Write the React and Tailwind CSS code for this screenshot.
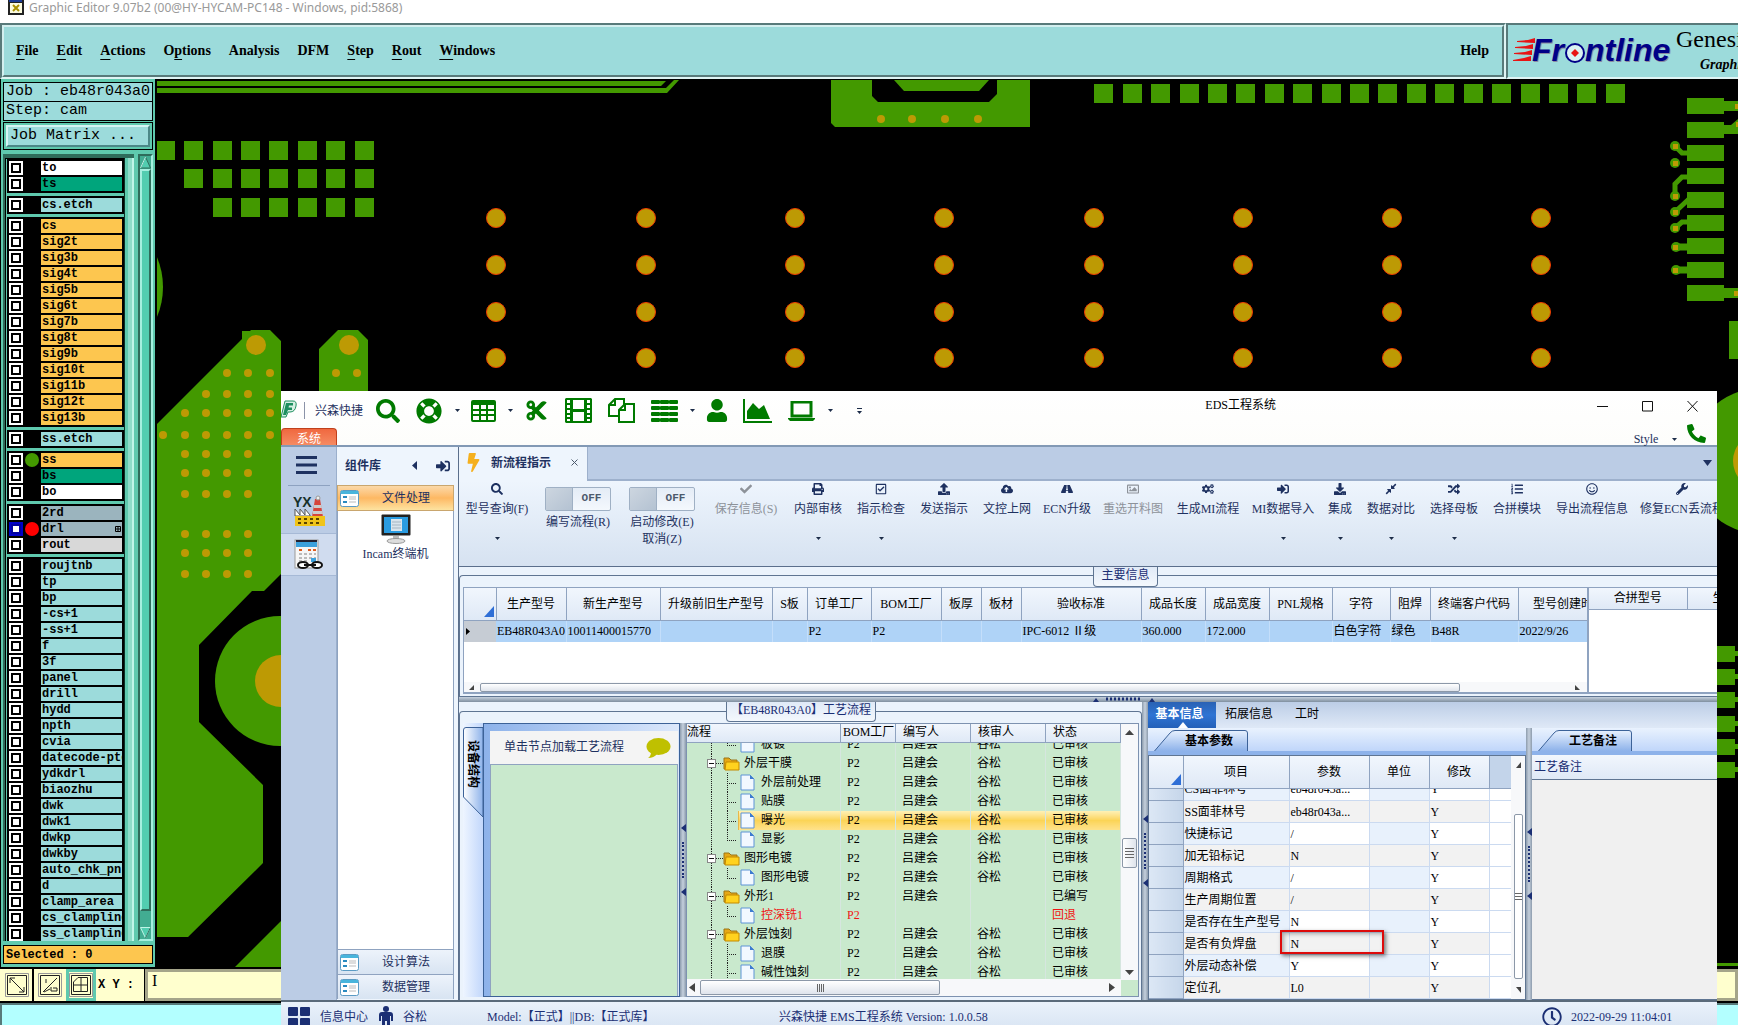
import { useState } from "react";
import {
  FaBolt, FaCheck, FaCloudUploadAlt, FaCogs, FaComment, FaCompressAlt, FaCut,
  FaDownload, FaLaptop, FaLifeRing, FaListOl, FaMale, FaPhone, FaPrint, FaRandom,
  FaRegCheckSquare, FaRegClock, FaRegImage, FaRegSmile, FaRoad, FaSearch, FaSignInAlt, FaUpload,
  FaUser, FaWrench,
} from "react-icons/fa";

const GREEN = "#439900";
const GOLD = "#bd9a04";

const menus = [
  ["F", "ile", ""],
  ["E", "dit", ""],
  ["A", "ctions", ""],
  ["p", "tions", "O"],
  ["", "Analysis", ""],
  ["", "DFM", ""],
  ["S", "tep", ""],
  ["R", "out", ""],
  ["W", "indows", ""],
];

const layerGroups = [
  { rows: [["to", "bg-white"], ["ts", "bg-[#00a57c]"]] },
  { rows: [["cs.etch", "bg-[#9cdbdb]"]] },
  {
    rows: ["cs", "sig2t", "sig3b", "sig4t", "sig5b", "sig6t", "sig7b", "sig8t", "sig9b", "sig10t", "sig11b", "sig12t", "sig13b"]
      .map((n) => [n, "bg-[#fdc64f]"]),
  },
  { rows: [["ss.etch", "bg-[#9cdbdb]"]] },
  { rows: [["ss", "bg-[#fdc64f]"], ["bs", "bg-[#00a57c]"], ["bo", "bg-white"]] },
  { rows: [["2rd", "bg-[#9bb4be]"], ["drl", "bg-[#9bb4be]"], ["rout", "bg-[#d8d8d8]"]] },
  {
    rows: ["roujtnb", "tp", "bp", "-cs+1", "-ss+1", "f", "3f", "panel", "drill", "hydd", "npth", "cvia", "datecode-pte",
      "ydkdrl", "biaozhu", "dwk", "dwk1", "dwkp", "dwkby", "auto_chk_pnl", "d", "clamp_area", "cs_clampline", "ss_clampline"]
      .map((n) => [n, "bg-[#9cdbdb]"]),
  },
];

const tools = [
  { label: "型号查询(F)", icon: FaSearch, w: "w-[66px]", caret: true },
  { label: "编写流程(R)", toggle: true, w: "w-[66px]" },
  { label: "启动修改(E)", second: "取消(Z)", toggle: true, w: "w-[72px]" },
  { label: "保存信息(S)", icon: FaCheck, w: "w-[66px]", off: true },
  { label: "内部审核", icon: FaPrint, w: "w-12", caret: true },
  { label: "指示检查", icon: FaRegCheckSquare, w: "w-12", caret: true },
  { label: "发送指示", icon: FaUpload, w: "w-12" },
  { label: "文控上网", icon: FaCloudUploadAlt, w: "w-12" },
  { label: "ECN升级", icon: FaRoad, w: "w-[42px]" },
  { label: "重选开料图", icon: FaRegImage, w: "w-[60px]", off: true },
  { label: "生成MI流程", icon: FaCogs, w: "w-[60px]" },
  { label: "MI数据导入", icon: FaSignInAlt, w: "w-[60px]", caret: true },
  { label: "集成", icon: FaDownload, w: "w-6", caret: true },
  { label: "数据对比", icon: FaCompressAlt, w: "w-12", caret: true },
  { label: "选择母板", icon: FaRandom, w: "w-12", caret: true },
  { label: "合拼模块", icon: FaListOl, w: "w-12" },
  { label: "导出流程信息", icon: FaRegSmile, w: "w-[72px]" },
  { label: "修复ECN丢流程", icon: FaWrench, w: "w-[78px]" },
];

const mainCols = [
  ["生产型号", "EB48R043A0", "w-[70px]"],
  ["新生产型号", "10011400015770", "w-[94px]"],
  ["升级前旧生产型号", "", "w-[112px]"],
  ["S板", "", "w-[35px]"],
  ["订单工厂", "P2", "w-16"],
  ["BOM工厂", "P2", "w-[70px]"],
  ["板厚", "", "w-10"],
  ["板材", "", "w-10"],
  ["验收标准", "IPC-6012 Ⅱ级", "w-[120px]"],
  ["成品长度", "360.000", "w-16"],
  ["成品宽度", "172.000", "w-16"],
  ["PNL规格", "", "w-[63px]"],
  ["字符", "白色字符", "w-[58px]"],
  ["阻焊", "绿色", "w-10"],
  ["终端客户代码", "B48R", "w-[88px]"],
  ["型号创建时间", "2022/9/26", "w-[102px]"],
];

const flowRows = [
  { name: "板镀", who: "吕建会", check: "谷松", state: "已审核", last: true },
  { name: "外层干膜", folder: true, who: "吕建会", check: "谷松", state: "已审核" },
  { name: "外层前处理", who: "吕建会", check: "谷松", state: "已审核" },
  { name: "贴膜", who: "吕建会", check: "谷松", state: "已审核" },
  { name: "曝光", who: "吕建会", check: "谷松", state: "已审核", active: true },
  { name: "显影", who: "吕建会", check: "谷松", state: "已审核", last: true },
  { name: "图形电镀", folder: true, who: "吕建会", check: "谷松", state: "已审核" },
  { name: "图形电镀", who: "吕建会", check: "谷松", state: "已审核", last: true },
  { name: "外形1", folder: true, who: "吕建会", check: "", state: "已编写" },
  { name: "控深铣1", who: "", check: "", state: "回退", last: true, red: true },
  { name: "外层蚀刻", folder: true, who: "吕建会", check: "谷松", state: "已审核" },
  { name: "退膜", who: "吕建会", check: "谷松", state: "已审核" },
  { name: "碱性蚀刻", who: "吕建会", check: "谷松", state: "已审核" },
];

const params = [
  ["CS面菲林号", "eb48r043a..."],
  ["SS面菲林号", "eb48r043a..."],
  ["快捷标记", "/"],
  ["加无铅标记", "N"],
  ["周期格式", "/"],
  ["生产周期位置", "/"],
  ["是否存在生产型号", "N"],
  ["是否有负焊盘", "N"],
  ["外层动态补偿", "Y"],
  ["定位孔", "L0"],
];

const squares = [
  [[156, 184, 213, 241, 269, 298, 326, 355], 141],
  [[184, 213, 241, 269, 298, 326, 355], 169],
  [[213, 241, 269, 298, 326, 355], 198],
  [[1094, 1123, 1151, 1180, 1208, 1236, 1265, 1293, 1322, 1350, 1378, 1407, 1435, 1464, 1492, 1521, 1549, 1577, 1606], 84],
];

const vias = [
  [373, [227, 248, 270, 336, 357]],
  [394, [206, 227, 248, 270]],
  [413, [185, 206, 227, 248, 270]],
  [435, [163, 185, 206, 227, 248, 270]],
  [454, [185, 206, 227, 248]],
  [473, [185, 206, 227, 248]],
  [494, [185, 206, 227, 248]],
  [534, [185, 206, 227, 248]],
  [553, [185, 206, 227, 248]],
  [574, [185, 206, 227, 248]],
];

const headGrad = "bg-linear-to-b from-[#f1f6fd] to-[#dfe9f6]";

function Board() {
  return (
    <svg viewBox="157 79 1581 888" preserveAspectRatio="xMinYMin slice" className="block h-full w-full bg-black">
      <g fill={GREEN}>
        <path d="M157 81H666L661 86H157zM157 88H666L674 80H679L667 93H157z" />
        <path d="M831 80H872V96L878 102H989L997 94V80H1030V127H835L831 123z" />
        <path d="M894 80H989L979 91H904z" />
        {squares.map(([xs, y]) => xs.map((x) => <rect key={x + "-" + y} x={x} y={y} width="19" height="19" />))}
        <circle cx="85" cy="287" r="78" />
        <path d="M242 331H250L251 330H270L281 341V574L264 591H252L199 645V722L263 785V863L188 937H157V424L242 339z" />
        <path d="M319 349L338 330H358L368 340V395H319z" />
        <circle cx="280" cy="681" r="65" />
        <path d="M235 967L290 912V967z" />
        <circle cx="1762" cy="461" r="73" />
        {[98, 122, 145, 168, 192, 215, 238, 262, 285].map((y) => (
          <rect key={y} x="1687" y={y} width="37" height="16" />
        ))}
        <path d="M1724 101H1738V111H1724zM1724 125H1731L1738 119V134H1724zM1724 288H1738V298H1724z" />
        <path d="M1729 321H1738V359H1729z" />
        {[646, 669, 692, 716, 739, 762].map((y) => (
          <path key={y} d={`M1710 ${y}H1735V${y + 5}H1738V${y + 10}H1735V${y + 16}H1710z`} />
        ))}
        <path d="M1710 963H1738V966H1710z" />
        {[[1675, 146], [1675, 163], [1675, 196], [1675, 212], [1675, 228], [1676, 247], [1676, 270]].map(([x, y]) => (
          <circle key={y} cx={x} cy={y} r="5" />
        ))}
      </g>
      <g fill="none" stroke={GREEN} strokeWidth="5">
        <path d="M1675 146L1682 153H1688M1675 196V184L1682 177H1688M1675 212L1689 199M1675 228L1682 222H1688" />
        <path d="M1676 247H1688M1676 270H1688" strokeWidth="7" />
      </g>
      <g fill={GOLD}>
        {[146, 163, 196, 212, 228, 247, 270].map((y) => <rect key={y} x="1673" y={y - 2} width="5" height="5" />)}
        {[881, 912, 945, 978].map((x) => <circle key={x} cx={x} cy="119" r="4" />)}
        {vias.map(([y, xs]) => xs.map((x) => <circle key={x + "-" + y} cx={x} cy={y} r="4" />))}
        <circle cx="256" cy="345" r="10" />
        <circle cx="349" cy="345" r="10" />
        <circle cx="281" cy="681" r="26" />
        <circle cx="1761" cy="461" r="28" />
        <rect x="1735" y="104" width="3" height="5" />
        <rect x="1736" y="122" width="2" height="5" />
        <rect x="1734" y="291" width="4" height="5" />
      </g>
      <g fill={GOLD} stroke="#f03c00" strokeWidth="1">
        {[496, 646, 795, 944, 1094, 1243, 1392, 1541].map((x) =>
          [218, 265, 312, 358].map((y) => <circle key={x + "-" + y} cx={x} cy={y} r="9.500" />)
        )}
      </g>
    </svg>
  );
}

function FrontlineLogo() {
  return (
    <svg width="162" height="30" viewBox="0 0 162 30" className="shrink-0">
      <g fill="#e81414">
        <path d="M4 5L15 4L22 2V7L4 6zM2 11L13 10L20 8V13L2 12zM1 17L12 16L19 14V19L1 18zM0 24L11 22L18 20V25L0 25z" />
      </g>
      <g fontFamily="Liberation Sans, Arial, sans-serif" fontWeight="bold" fontStyle="italic" fontSize="32">
        <text x="20" y="26" fill="#8a8aa0">Fr</text>
        <text x="19" y="25" fill="#000087">Fr</text>
        <text x="73" y="26" fill="#8a8aa0">ntline</text>
        <text x="72" y="25" fill="#000087">ntline</text>
      </g>
      <circle cx="62" cy="17" r="9" fill="#d9f2f2" stroke="#000087" strokeWidth="2" />
      <path d="M62 13L66 17L62 21L58 17z" fill="#e81414" />
    </svg>
  );
}

function LayerRow({ name, color }) {
  const picked = name === "drl";
  return (
    <label className="flex h-4 items-start">
      <span className={`flex h-[14px] w-[14px] shrink-0 items-center justify-center ${picked ? "bg-[#0000c8]" : "bg-white"}`}>
        <input
          type="checkbox"
          aria-label={name}
          className={`h-[10px] w-[10px] appearance-none border-2 bg-white ${picked ? "border-[#0000a0]" : "border-black"}`}
        />
      </span>
      <span className="flex h-[14px] w-[18px] shrink-0 items-center justify-center">
        {name === "ss" && <span className="h-[14px] w-[14px] rounded-full bg-[#439900]" />}
        {picked && <span className="h-[14px] w-[14px] rounded-full bg-[#ff0000]" />}
      </span>
      <span className={`flex h-[14px] w-[81px] items-center justify-between overflow-hidden pl-px text-[12px] leading-[14px] font-bold whitespace-nowrap ${color}`}>
        {name}
        {picked && (
          <svg width="6" height="6" viewBox="0 0 6 6" className="mr-px shrink-0">
            <path d="M.5 .5H5.500V5.500H.5zM3 0V6M0 3H6" fill="none" stroke="#000" />
          </svg>
        )}
      </span>
    </label>
  );
}

function LayerPanel() {
  return (
    <div className="flex w-[157px] shrink-0 flex-col border-r-2 border-l border-black bg-[#5fc9ae] px-[2px] pt-[3px] pb-[3px] font-['Liberation_Mono',monospace] text-black">
      <div className="flex h-5 shrink-0 items-center border border-black bg-[#9cdbdb] px-[2px] text-[15px] whitespace-pre">Job : eb48r043a0</div>
      <div className="-mt-px flex h-5 shrink-0 items-center border border-black bg-[#9cdbdb] px-[2px] text-[15px] whitespace-pre">Step: cam</div>
      <div className="mt-px shrink-0 border border-black bg-[#5fc9ae] p-[2px]">
        <button className="flex h-[22px] w-full items-center border-2 border-t-[#d6f4f4] border-r-[#4c8888] border-b-[#4c8888] border-l-[#d6f4f4] bg-[#9cdbdb] px-[2px] text-[15px]">
          Job Matrix ...
        </button>
      </div>

      <div className="mt-1 flex min-h-0 flex-1 gap-1">
        <div className="flex min-w-0 flex-1 overflow-hidden border-t-4 border-l-2 border-[#2f6c5b]">
          <div className="flex w-[120px] shrink-0 flex-col gap-[3px] overflow-hidden border-t border-r border-l border-black border-r-[#0b2e24] bg-[#5fc9ae] pl-px">
            {layerGroups.map((g, i) => (
              <div key={i} className="w-[117px] shrink-0 bg-black pt-[2px] pl-[2px]">
                {g.rows.map(([name, color]) => <LayerRow key={name} name={name} color={color} />)}
              </div>
            ))}
          </div>
          <div className="w-[3px] bg-[#5fc9ae]" />
          <div className="w-1 bg-[#8fdcc9]" />
          <div className="w-[2px] bg-[#c0f5e8]" />
        </div>
        <div className="flex w-[15px] shrink-0 flex-col border-2 border-t-[#2f6c5b] border-r-[#a5efdf] border-b-[#a5efdf] border-l-[#2f6c5b] bg-[#42ac92]">
          <svg width="11" height="13" viewBox="0 0 11 13" className="shrink-0">
            <path d="M5.500 1L10.500 12H.5z" fill="#52cdb0" stroke="#2f6c5b" />
            <path d="M5.500 1L.5 12" stroke="#c0f5e8" />
          </svg>
          <div className="mb-4 flex-1 border-2 border-t-[#a5efdf] border-r-[#2f6c5b] border-b-[#2f6c5b] border-l-[#a5efdf] bg-[#52cdb0]" />
          <svg width="11" height="12" viewBox="0 0 11 12" className="shrink-0">
            <path d="M.5 .5H10.500L5.500 11z" fill="#52cdb0" stroke="#c0f5e8" />
            <path d="M10.500 .5L5.500 11" stroke="#2f6c5b" />
          </svg>
        </div>
      </div>

      <div className="mt-1 flex h-[19px] shrink-0 items-center border border-black bg-[#fdc64f] px-[2px] text-[12px] font-bold">Selected : 0</div>
    </div>
  );
}

function EditorWindow() {
  return (
    <div className="flex h-full flex-col bg-white">
      <header className="flex h-[23px] shrink-0 items-start gap-[5px] pl-2">
        <svg width="16" height="15" viewBox="0 0 16 15">
          <path d="M0 0H16V15H0z" fill="#222" />
          <path d="M1 0H14V2H1z" fill="#1c3c96" />
          <path d="M2 3H14V13H2z" fill="#fbfbe0" />
          <path d="M5 5L11 11M11 5L5 11" stroke="#a89000" strokeWidth="2" />
        </svg>
        <span className="font-['Noto_Sans',sans-serif] text-[12px] leading-[15px] text-[#999]">Graphic Editor 9.07b2 (00@HY-HYCAM-PC148 - Windows, pid:5868)</span>
      </header>

      <div className="flex h-14 shrink-0 font-['Liberation_Serif',serif] text-[14px] font-bold text-black">
        <div className="min-w-0 flex-1 border-2 border-t-[#587a7a] border-r-[#dff4f4] border-b-[#dff4f4] border-l-[#587a7a]">
          <nav className="flex h-full items-center gap-[18px] border-2 border-t-[#d3efef] border-r-[#587a7a] border-b-[#587a7a] border-l-[#d3efef] bg-[#9cdbdb] pr-[13px] pb-[2px] pl-3">
            {menus.map(([key, rest, pre]) => (
              <button key={key + rest} className="whitespace-nowrap">
                {pre}
                {key && <span className="underline underline-offset-4">{key}</span>}
                {rest}
              </button>
            ))}
            <button className="ml-auto">Help</button>
          </nav>
        </div>
        <div className="flex w-[232px] shrink-0 items-center gap-px overflow-hidden border-t-2 border-b-2 border-l-2 border-t-[#587a7a] border-b-[#dff4f4] border-l-[#587a7a] bg-[#9cdbdb] pl-[5px]">
          <FrontlineLogo />
          <div className="shrink-0 font-normal">
            <div className="text-[24px] leading-[28px]">Genesis</div>
            <div className="pl-6 text-[14px] leading-[24px] font-bold italic">Graphic</div>
          </div>
        </div>
      </div>

      <div className="flex min-h-0 flex-1">
        <LayerPanel />
        <div className="min-w-0 flex-1 overflow-hidden"><Board /></div>
      </div>

      <div className="flex h-[36px] shrink-0 border-t-2 border-b-2 border-black bg-[#ffffce] pl-[2px] font-['Liberation_Mono',monospace] text-black">
        <button aria-label="Snap line" className="flex w-8 items-center justify-center border-r-2 border-black">
          <svg width="24" height="24" viewBox="0 0 24 24" fill="none" stroke="#222">
            <path d="M.5 .5H23.500V23.500H.5z" stroke="#999" />
            <path d="M2.500 2.500H21.500V21.500H2.500zM5 5L19 19M5 10V5H10M14 19H19V14" />
          </svg>
        </button>
        <button aria-label="Snap angle" className="flex w-8 items-center justify-center">
          <svg width="24" height="24" viewBox="0 0 24 24" fill="none" stroke="#222">
            <path d="M.5 .5H23.500V23.500H.5z" stroke="#999" />
            <path d="M2.500 2.500H21.500V21.500H2.500zM5 19L19 5M6 19L12 16M8 6V10M13 14V18H19V15H15" />
          </svg>
        </button>
        <button aria-label="Snap grid" className="flex w-[30px] items-center justify-center border-3 border-[#5fc9ae]">
          <svg width="24" height="24" viewBox="0 0 24 24" fill="none" stroke="#222">
            <path d="M.5 .5H23.500V23.500H.5z" stroke="#999" />
            <path d="M2.500 2.500H21.500V21.500H2.500zM9 4.500H18.500V18.500H4.500V9zM12 4V19M4 12H19" />
          </svg>
        </button>
        <label htmlFor="xy" className="flex w-[49px] items-center border-r border-[#5fc9ae] pl-[2px] text-[12px] font-bold whitespace-pre">X Y :</label>
        <input id="xy" defaultValue="I" className="min-w-0 flex-1 border-3 border-[#a5a58a] bg-[#ffffce] px-1 pb-2 font-['Liberation_Serif',serif] text-[16px] outline outline-black" />
      </div>
      <div className="h-[22px] shrink-0 border-t-2 border-l-2 border-[#587a7a] bg-[#b3ffff]" />
    </div>
  );
}

function Caret({ className = "" }) {
  return <svg width="5" height="3" viewBox="0 0 5 3" className={`shrink-0 ${className}`}><path d="M0 0H5L2.500 3z" fill="#1c2c48" /></svg>;
}

function QuickBar() {
  const ic = "h-6 w-6 shrink-0 text-[#007a00]";
  return (
    <div className="flex h-[39px] items-center text-[#1e3160]">
      <svg width="18" height="18" viewBox="0 0 18 18" className="-mt-1 shrink-0">
        <path d="M4 1H12Q16 1 15 6Q14 12 9 12H7L5 17H0z" fill="#d5efe2" stroke="#1c8f5e" />
        <path d="M5 3H12V5.500H8L7.500 7.500H11V10H7L5 15H2z" fill="#1c8f5e" />
      </svg>
      <span className="ml-[5px] h-[17px] w-px bg-[#8b93a8]" />
      <span className="ml-[10px] w-12 text-[12px] whitespace-nowrap">兴森快捷</span>
      <button aria-label="搜索" className="ml-[13px]"><FaSearch className={ic} /></button>
      <button aria-label="帮助" className="ml-4 flex items-center gap-[13px]"><FaLifeRing className="h-[26px] w-[26px] text-[#007a00]" /><Caret /></button>
      <button aria-label="表格" className="ml-[11px] flex items-center gap-3">
        <svg width="25" height="22" viewBox="0 0 25 22" fill="#007a00">
          <path fillRule="evenodd" d="M2 0H23Q25 0 25 2V20Q25 22 23 22H2Q0 22 0 20V2Q0 0 2 0zM2 5V9H8V5zM10 5V9H15V5zM17 5V9H23V5zM2 11V14H8V11zM10 11V14H15V11zM17 11V14H23V11zM2 16V20H8V16zM10 16V20H15V16zM17 16V20H23V16z" />
        </svg>
        <Caret />
      </button>
      <button aria-label="剪切" className="ml-[12px]"><FaCut className="h-[23px] w-[23px] text-[#007a00]" /></button>
      <button aria-label="胶片" className="ml-[17px]">
        <svg width="27" height="25" viewBox="0 0 27 25" fill="#007a00">
          <path fillRule="evenodd" d="M1 0H26L27 1V24L26 25H1L0 24V1zM8 2V11H19V2zM8 14V23H19V14zM2 2V5H5V2zM2 7V10H5V7zM2 12V15H5V12zM2 17V19H5V17zM2 21V23H5V21zM22 2V5H25V2zM22 7V10H25V7zM22 12V15H25V12zM22 17V19H25V17zM22 21V23H25V21z" />
        </svg>
      </button>
      <button aria-label="复制" className="ml-[16px]">
        <svg width="27" height="25" viewBox="0 0 27 25" fill="#fff" stroke="#007a00" strokeWidth="2">
          <path d="M7 1H16V18H1V7zM7 1V7H1" />
          <path d="M17 6H26V24H11V12zM17 6V12H11" />
        </svg>
      </button>
      <button aria-label="列表" className="ml-4 flex items-center gap-[12px]">
        <svg width="27" height="22" viewBox="0 0 27 22" fill="#007a00">
          {[0, 6, 12, 18].map((y) => [0, 9, 18].map((x) => <rect key={x + "-" + y} x={x} y={y} width="9" height="4" rx="1" />))}
        </svg>
        <Caret />
      </button>
      <button aria-label="用户" className="ml-[11px]">
        <FaUser className="h-[23px] w-[22px] text-[#007a00]" />
      </button>
      <button aria-label="图表" className="ml-[15px]">
        <svg width="29" height="24" viewBox="0 0 29 24" fill="#007a00">
          <path d="M0 0H2V22H29V24H0zM4 20V12L10 4L16 10L21 6L27 20z" />
        </svg>
      </button>
      <button aria-label="终端" className="ml-4 flex items-center gap-[13px]">
        <svg width="27" height="20" viewBox="0 0 27 20">
          <path d="M4 1H23V15H4z" fill="none" stroke="#007a00" strokeWidth="3" />
          <path d="M0 17H27V18L25 20H2L0 18z" fill="#007a00" />
        </svg>
        <Caret />
      </button>
      <button aria-label="更多" className="ml-[24px] flex flex-col items-center gap-[2px]"><span className="h-px w-[5px] bg-[#1c2c48]" /><Caret /></button>
    </div>
  );
}

function WindowHeader() {
  return (
    <div className="flex h-14 shrink-0 flex-col justify-between border-b-2 border-[#8299b5] bg-linear-to-b from-white to-[#fdfdfb]">
      <div className="flex items-start">
        <QuickBar />
        <h1 className="ml-auto pt-[6px] text-[12px] leading-[16px] text-black">EDS工程系统</h1>
        <div className="ml-[321px] flex items-center gap-[34px] pt-[9px] pr-[19px]">
          <button aria-label="最小化"><svg width="11" height="12" viewBox="0 0 11 12"><path d="M0 6.500H11" stroke="#111" /></svg></button>
          <button aria-label="最大化"><svg width="11" height="12" viewBox="0 0 11 12"><path d="M.5 1.500H10.500V11H.5z" fill="none" stroke="#111" /></svg></button>
          <button aria-label="关闭"><svg width="11" height="12" viewBox="0 0 11 12"><path d="M.5 1L10.500 11.500M10.500 1L.5 11.500" stroke="#111" /></svg></button>
        </div>
      </div>
      <div className="flex h-[15px] items-end justify-between">
        <button className="h-[17px] w-14 shrink-0 rounded-t border border-b-0 border-[#c0401c] bg-linear-to-b from-[#f0683f] to-[#f58a62] pt-[2px] text-[12px] leading-[16px] text-white">系统</button>
        <div className="flex items-end pr-[11px]">
          <button className="flex items-center gap-[10px] text-[12px] leading-[12px] text-[#1e3160]"><span className="w-8">Style</span><Caret /></button>
          <button aria-label="电话" className="ml-[10px] pb-[2px]"><FaPhone className="h-[19px] w-[19px] -scale-x-100 text-[#007a00]" /></button>
        </div>
      </div>
    </div>
  );
}

function FormIcon() {
  return (
    <svg width="19" height="17" viewBox="0 0 19 17" className="shrink-0">
      <rect x=".5" y=".5" width="18" height="16" rx="2" fill="#fff" stroke="#5b9bc4" />
      <path d="M1 1H18V4H1z" fill="#49b5dc" />
      <path d="M3 7H7M3 12H7" stroke="#2a8ac0" strokeWidth="2" />
      <path d="M9 7H16M9 9H16M9 12H16" stroke="#bbb" />
    </svg>
  );
}

function Sidebar() {
  return (
    <aside className="flex w-14 shrink-0 flex-col items-center border-r border-[#9aafcc] bg-[#bbcce5]">
      <button aria-label="菜单" className="flex h-[39px] w-[42px] items-center justify-center border-b border-[#8ea2c0] pr-1 pb-[2px]">
        <svg width="21" height="18" viewBox="0 0 21 18"><path d="M0 1.500H21M0 9H21M0 16.500H21" stroke="#1e3160" strokeWidth="3" /></svg>
      </button>
      <button aria-label="YX" className="flex h-[47px] w-full items-center justify-center pt-[2px]">
        <svg width="32" height="32" viewBox="0 0 32 32">
          <text x="0" y="12" fontFamily="Liberation Sans, sans-serif" fontWeight="bold" fontSize="14" fill="#16302a">YX</text>
          <path d="M22 4H27L30 22H19z" fill="#d6453c" />
          <path d="M21 10H28L29 13H21zM20 16H29L30 19H20z" fill="#ccc" />
          <circle cx="25" cy="3" r="2" fill="#eee" stroke="#999" />
          <path d="M2 21V14L7 20V14L12 20V14L17 20V21z" fill="#fff" stroke="#555" />
          <path d="M2 21H32V31H2z" fill="#f0c419" />
          <path d="M5 24H8M11 24H14M17 24H20M23 24H26M5 28H8M11 28H14M17 28H20M23 28H26" stroke="#5a4300" strokeWidth="2" />
        </svg>
      </button>
      <button aria-label="设计" className="flex h-[43px] w-full items-center justify-center border-y border-[#a6b9d6] bg-[#d0dcef]">
        <svg width="29" height="32" viewBox="0 0 29 32">
          <rect x="1" y="1" width="23" height="28" fill="#f6f6f6" stroke="#999" />
          <path d="M2 3H23V8H2z" fill="#3ba0dc" />
          <path d="M2 1H23V3H2z" fill="#223" />
          <path d="M5 11H8M14 11H17M19 11H22" stroke="#e05a1c" strokeWidth="2" />
          <path d="M5 15H22M5 19H22M5 22H14" stroke="#bbb" strokeWidth="2" strokeDasharray="3 2" />
          <path d="M17 19H22V23H17z" fill="#3ba0dc" />
          <ellipse cx="9" cy="26" rx="5" ry="3" fill="#fff" stroke="#111" strokeWidth="2" />
          <ellipse cx="23" cy="26" rx="5" ry="3" fill="#fff" stroke="#111" strokeWidth="2" />
          <path d="M10 26H22" stroke="#111" strokeWidth="2" />
        </svg>
      </button>
    </aside>
  );
}

function ComponentLibrary() {
  return (
    <section className="flex w-[122px] shrink-0 flex-col border-r border-[#5b6f8c] bg-[#eef5fd] pr-1 text-[12px] text-[#1e3160]">
      <div className="flex h-[38px] shrink-0 items-center pb-px pl-2 font-bold">
        <h2>组件库</h2>
        <button aria-label="收起" className="ml-auto"><svg width="5" height="9" viewBox="0 0 5 9"><path d="M5 0V9L0 4.500z" fill="#1e3160" /></svg></button>
        <button aria-label="停靠" className="mr-1 ml-[19px]"><FaSignInAlt className="h-[14px] w-[14px]" /></button>
      </div>
      <button className="flex h-[26px] shrink-0 items-center border border-[#c9a66e] bg-linear-to-b from-[#fbd9a8] via-[#fdb863] to-[#fde3a0] pl-[2px]">
        <FormIcon /><span className="flex-1 text-center">文件处理</span>
      </button>
      <div className="flex flex-1 flex-col items-center border-x border-[#8fa3c0] bg-white pt-[3px]">
        <svg width="30" height="30" viewBox="0 0 30 30">
          <rect x=".5" y=".5" width="29" height="21" rx="1" fill="#222" />
          <rect x="3" y="3" width="24" height="16" fill="#2a9be0" />
          <rect x="10" y="5" width="11" height="12" fill="#d9e4ec" />
          <path d="M11 8H20M11 11H20M11 14H20" stroke="#a5b5c2" />
          <path d="M12 22H18V26H12z" fill="#bbb" />
          <ellipse cx="15" cy="27" rx="9" ry="2.500" fill="#ddd" stroke="#999" />
        </svg>
        <button className="leading-[20px]">Incam终端机</button>
      </div>
      {["设计算法", "数据管理"].map((t) => (
        <button key={t} className="flex h-[25px] shrink-0 items-center border border-b-0 border-[#8fa3c0] bg-linear-to-b from-[#edf3fb] to-[#d8e4f2] pl-[2px] last:mb-px">
          <FormIcon /><span className="flex-1 text-center">{t}</span>
        </button>
      ))}
    </section>
  );
}

function Tool({ t }) {
  const Icon = t.icon;
  const [on, setOn] = useState(false);
  if (t.toggle) {
    return (
      <div className={`flex shrink-0 flex-col items-center ${t.w}`}>
        <button
          role="switch"
          aria-checked={on}
          aria-label={t.label}
          onClick={() => setOn(!on)}
          className="flex h-[24px] w-[66px] shrink-0 items-center rounded-[2px] border border-[#9fb0c4] bg-linear-to-b from-[#e4ecf6] to-[#f4f8fd]"
        >
          <span className="h-[22px] w-[27px] border-r border-[#9fb0c4] bg-linear-to-br from-[#cdd6e0] to-[#b4c2d2]" />
          <span className="flex-1 pb-px text-center font-['Liberation_Mono',monospace] text-[11px] font-bold text-[#4d5a6c]">{on ? "ON" : "OFF"}</span>
        </button>
        <span className="mt-[3px] leading-[17px] whitespace-nowrap">{t.label}</span>
        {t.second && <span className="leading-[17px]">{t.second}</span>}
      </div>
    );
  }
  return (
    <button className={`flex shrink-0 flex-col items-center ${t.w} ${t.off ? "text-[#8d9299]" : ""}`}>
      <Icon className="h-3 w-3" />
      <span className="mt-[6px] leading-[17px] whitespace-nowrap">{t.label}</span>
      {t.caret && <Caret className="mt-[19px]" />}
    </button>
  );
}

function MainInfo() {
  return (
    <section className="relative flex h-[130px] shrink-0 flex-col overflow-hidden bg-[#ebf3fc] pt-2">
      <h2 className="absolute top-0 left-[634px] z-10 h-5 w-[65px] rounded-b border border-t-0 border-[#5f7592] bg-linear-to-b from-[#e0eaf7] to-[#f4f8fd] text-center text-[12px] leading-[16px] text-[#1b2f74]">主要信息</h2>
      <div className="flex min-h-0 flex-1 overflow-hidden rounded-tl border-t border-b border-l border-[#5f7592] pt-[11px] pb-[2px] pl-[3px]">
        <div className="flex w-[1126px] shrink-0 flex-col overflow-hidden border-2 border-t border-l border-[#8fa3c0] bg-white">
          <table className="w-[1156px] table-fixed border-collapse text-[12px] text-black">
            <thead>
              <tr className={`h-8 ${headGrad}`}>
                <th className="w-8 border-r border-b border-[#8fa3c0]">
                  <svg width="10" height="11" viewBox="0 0 10 11" className="mt-4 mr-[2px] ml-auto"><path d="M10 0V11H0z" fill="#2f6fd6" /></svg>
                </th>
                {mainCols.map(([h, , w]) => (
                  <th key={h} className={`border-r border-b border-[#8fa3c0] font-normal whitespace-nowrap ${w}`}>{h}</th>
                ))}
              </tr>
            </thead>
            <tbody>
              <tr className="h-[22px] bg-[#afd3f7]">
                <td className="bg-[#c6ccd4]"><svg width="4" height="7" viewBox="0 0 4 7" className="ml-[2px]"><path d="M0 0L4 3.500L0 7z" /></svg></td>
                {mainCols.map(([h, v]) => (
                  <td key={h} className="border-r border-[#c4defa] pl-px leading-[16px] whitespace-nowrap">{v}</td>
                ))}
              </tr>
            </tbody>
          </table>
          <div className="mt-auto flex h-[10px] items-center bg-[#f7f8fa] px-[5px]">
            <svg width="5" height="5" viewBox="0 0 5 5"><path d="M5 0V5H0z" fill="#444" /></svg>
            <div className="ml-[6px] h-[9px] w-[980px] rounded-[2px] border border-[#8c98a8] bg-linear-to-b from-white to-[#dfe4ec]" />
            <svg width="5" height="5" viewBox="0 0 5 5" className="mr-[2px] ml-auto"><path d="M0 0V5H5z" fill="#444" /></svg>
          </div>
        </div>
        <div className="min-w-0 flex-1 overflow-hidden border-t border-b-2 border-[#8fa3c0] bg-white">
          <table className="w-[200px] table-fixed border-collapse text-[12px] text-black">
            <thead>
              <tr className={`h-[21px] ${headGrad}`}>
                <th className="w-[98px] border-r border-b border-[#8fa3c0] font-normal">合拼型号</th>
                <th className="border-b border-[#8fa3c0] pl-[25px] text-left font-normal whitespace-nowrap">生产型号</th>
              </tr>
            </thead>
          </table>
        </div>
      </div>
    </section>
  );
}

function VSplit() {
  return (
    <div className="flex w-[6px] shrink-0 flex-col items-center justify-center gap-[10px] bg-linear-to-r from-[#8d9cad] via-[#c5d0dd] to-[#8d9cad]">
      <svg width="5" height="8" viewBox="0 0 5 8"><path d="M5 0V8L0 4z" fill="#1b2f74" /></svg>
      <div className="h-9 w-0 border-l-2 border-dotted border-[#1b2f74]" />
      <svg width="5" height="8" viewBox="0 0 5 8"><path d="M5 0V8L0 4z" fill="#1b2f74" /></svg>
    </div>
  );
}

function TreeName({ row }) {
  if (row.folder) {
    return (
      <div className="flex h-[19px] items-center">
        <svg width="57" height="19" viewBox="0 0 57 19" className="shrink-0">
          <path d="M24.500 0V19M29 9.500H36" stroke="#222" strokeDasharray="1 1" />
          <rect x="20.500" y="5.500" width="8" height="8" fill="#fff" stroke="#888" />
          <path d="M22 9.500H27" stroke="#111" />
          <path d="M37 4H42L44 6H50V15H37z" fill="#e6a817" stroke="#9a7418" />
          <path d="M39 8H52V16H38z" fill="#ffd21e" stroke="#c48a00" />
        </svg>
        {row.name}
      </div>
    );
  }
  return (
    <div className="flex h-[19px] items-center">
      <svg width="51" height="19" viewBox="0 0 51 19" className="shrink-0">
        <path d={`M24.500 0V19M40.500 0V${row.last ? 10 : 19}M40 10.500H50`} fill="none" stroke="#222" strokeDasharray="1 1" />
      </svg>
      <div className={`flex h-[19px] flex-1 items-center ${row.active ? "border-l border-[#e8b84a]" : "pl-px"}`}>
        <svg width="15" height="17" viewBox="0 0 15 17" className="mr-[6px] ml-px shrink-0">
          <path d="M1 1H10L14 5V16H1z" fill="#f2f8ff" stroke="#5d93d6" />
          <path d="M10 1V5H14z" fill="#3d7bd0" />
        </svg>
        {row.name}
      </div>
    </div>
  );
}

function FlowTree() {
  const cell = "border-r border-[#d6e6df] pl-[6px]";
  const head = "border-r border-b border-[#8fa3c0] text-left font-normal whitespace-nowrap";
  return (
    <div className="flex min-w-0 flex-1 border border-[#7d92b0] bg-[#c9e9cd] text-[12px] text-black">
      <div className="flex min-w-0 flex-1 flex-col">
        <table className="w-full table-fixed border-collapse">
          <thead>
            <tr className={`h-[18px] leading-[17px] ${headGrad}`}>
              <th className={head}>流程</th>
              <th className={`w-[55px] pl-[2px] ${head}`}>BOM工厂</th>
              <th className={`w-[75px] pl-[7px] ${head}`}>编写人</th>
              <th className={`w-[75px] pl-[7px] ${head}`}>核审人</th>
              <th className={`w-[75px] pl-[7px] ${head}`}>状态</th>
            </tr>
          </thead>
        </table>
        <div className="h-0 min-h-0 flex-1 overflow-hidden">
          <table className="-mt-2 w-full table-fixed border-collapse leading-[18px]">
            <tbody>
              {flowRows.map((r, i) => {
                const hot = r.active ? "bg-linear-to-b from-[#fff0b4] via-[#fbd456] to-[#ffe28a]" : "";
                return (
                  <tr key={i} className={`h-[19px] ${r.red ? "text-[#f01414]" : ""}`}>
                    <td className={`border-r border-[#d6e6df] p-0 ${r.active ? "bg-linear-to-b from-[#fff0b4] via-[#fbd456] to-[#ffe28a] bg-size-[calc(100%-52px)_100%] bg-right bg-no-repeat" : ""}`}><TreeName row={r} /></td>
                    <td className={`w-[55px] ${cell} ${hot}`}>P2</td>
                    <td className={`w-[75px] ${cell} ${hot}`}>{r.who}</td>
                    <td className={`w-[75px] ${cell} ${hot}`}>{r.check}</td>
                    <td className={`w-[75px] ${cell} ${hot}`}>{r.state}</td>
                  </tr>
                );
              })}
            </tbody>
          </table>
        </div>
        <div className="flex h-[17px] shrink-0 items-center bg-[#f7f8fa] px-[2px]">
          <svg width="6" height="9" viewBox="0 0 6 9"><path d="M6 0V9L0 4.500z" fill="#444" /></svg>
          <div className="ml-[5px] flex h-[15px] w-60 items-center justify-center gap-px rounded-[2px] border border-[#8c98a8] bg-linear-to-b from-white to-[#dfe4ec]">
            {[0, 1, 2, 3].map((n) => <span key={n} className="h-2 w-px bg-[#666]" />)}
          </div>
          <svg width="6" height="9" viewBox="0 0 6 9" className="mr-1 ml-auto"><path d="M0 0V9L6 4.500z" fill="#444" /></svg>
        </div>
      </div>
      <div className="mb-4 flex w-[17px] shrink-0 flex-col items-center bg-[#f7f8fa] pt-[6px] pb-[5px]">
        <svg width="9" height="5" viewBox="0 0 9 5"><path d="M0 5H9L4.500 0z" fill="#444" /></svg>
        <div className="mt-[103px] flex h-[30px] w-[15px] flex-col items-center justify-center gap-[2px] rounded-[2px] border border-[#8c98a8] bg-linear-to-r from-white to-[#dfe4ec]">
          {[0, 1, 2, 3].map((n) => <span key={n} className="h-px w-[9px] bg-[#666]" />)}
        </div>
        <svg width="9" height="5" viewBox="0 0 9 5" className="mt-auto"><path d="M0 0H9L4.500 5z" fill="#444" /></svg>
      </div>
    </div>
  );
}

function ProcessFlow() {
  return (
    <section className="relative flex w-[683px] shrink-0 flex-col bg-[#ebf3fc] pt-[9px]">
      <h2 className="absolute top-0 left-[267px] z-10 h-5 w-[150px] rounded-b border border-t-0 border-[#5f7592] bg-linear-to-b from-[#e0eaf7] to-[#f4f8fd] text-center text-[12px] leading-[16px] whitespace-nowrap text-[#1b2f74]">【EB48R043A0】工艺流程</h2>
      <div className="flex min-h-0 flex-1 rounded-t border border-b-0 border-[#5f7592] pt-[11px] pr-[2px] pb-[3px] pl-[3px]">
        <div className="flex w-[217px] shrink-0">
          <div className="w-5 shrink-0 bg-linear-to-r from-[#eef5ff] to-[#c2d7fb] pt-1">
            <button className="relative block h-[90px] w-5 pb-4">
              <svg width="20" height="90" viewBox="0 0 20 90" className="absolute inset-0">
                <defs><linearGradient id="side" x1="0" x2="1"><stop offset="0" stopColor="#fff" /><stop offset="1" stopColor="#8db2ea" /></linearGradient></defs>
                <path d="M20 .5H3Q.5 .5 .5 3V70L20 90z" fill="url(#side)" stroke="#3c6298" />
              </svg>
              <span className="relative flex h-full w-5 items-center justify-center">
                <span className="shrink-0 rotate-90 text-[12px] leading-[18px] font-bold whitespace-nowrap text-black">设备结构</span>
              </span>
            </button>
          </div>
          <div className="flex min-w-0 flex-1 flex-col border border-[#3c6298] bg-linear-to-r from-[#8db2ea] to-[#dce8fb] pt-[7px] pr-px pl-[6px]">
            <div className="flex h-[33px] shrink-0 items-center justify-between bg-[#f4f4f4] pr-[7px] pb-px pl-[14px] text-[12px] text-[#1e3160]">
              单击节点加载工艺流程
              <svg width="25" height="21" viewBox="0 0 25 21" className="mt-[2px]">
                <ellipse cx="12.500" cy="8.500" rx="12" ry="8.500" fill="#bfc000" />
                <path d="M5 14Q5 18 2 20Q8 20 11 16z" fill="#bfc000" />
              </svg>
            </div>
            <div className="flex-1 border border-b-0 border-[#8fa3c0] bg-[#c9e9cd]" />
          </div>
        </div>
        <VSplit />
        <FlowTree />
      </div>
    </section>
  );
}

function SlantTab({ children }) {
  return (
    <div className="h-[27px] shrink-0 border-b-4 border-[#8db2ea] bg-linear-to-b from-[#e9f2fe] to-[#c0d6fa] pt-[2px] pl-[6px]">
      <button className="relative block h-[21px] w-[94px] text-[12px] font-bold text-black">
        <svg width="94" height="21" viewBox="0 0 94 21" className="block">
          <defs><linearGradient id="slant" x1="0" x2="0" y1="0" y2="1"><stop offset="0" stopColor="#e8f1fe" /><stop offset="1" stopColor="#8db2ea" /></linearGradient></defs>
          <path d="M.5 21L16 3Q18 .5 21 .5H91Q93.500 .5 93.500 3V21" fill="url(#slant)" stroke="#3c6298" />
        </svg>
        <span className="absolute inset-0 flex items-center justify-center pl-4">{children}</span>
      </button>
    </div>
  );
}

function ParamPanel() {
  return (
    <div className="flex w-[378px] shrink-0 flex-col">
      <SlantTab>基本参数</SlantTab>
      <div className="flex min-h-0 flex-1 border border-[#5f7592] text-[12px] text-black">
        <div className="flex min-w-0 flex-1 flex-col bg-white">
          <table className="w-full shrink-0 table-fixed border-collapse">
            <thead>
              <tr className={`h-8 ${headGrad}`}>
                <th className="w-[34px] border-r border-b border-[#8fa3c0]">
                  <svg width="10" height="11" viewBox="0 0 10 11" className="mt-4 mr-[2px] ml-auto"><path d="M10 0V11H0z" fill="#2f6fd6" /></svg>
                </th>
                <th className="w-[106px] border-r border-b border-[#8fa3c0] font-normal">项目</th>
                <th className="w-20 border-r border-b border-[#8fa3c0] font-normal">参数</th>
                <th className="w-[60px] border-r border-b border-[#8fa3c0] font-normal">单位</th>
                <th className="w-[60px] border-r border-b border-[#8fa3c0] font-normal">修改</th>
                <th className="border-b border-[#8fa3c0] bg-[#c3d4ea]" />
              </tr>
            </thead>
          </table>
          <div className="h-0 min-h-0 flex-1 overflow-hidden">
            <table className="-mt-[10px] w-full table-fixed border-collapse leading-[16px]">
              <tbody>
                {params.map(([name, value], i) => {
                  const alt = i % 2 === 1;
                  const line = "border-r border-b border-[#cbdaf0]";
                  const marked = name === "是否有负焊盘";
                  return (
                    <tr key={name} className={`h-[22px] ${alt ? "bg-[#f2f2f2]" : ""}`}>
                      <td className="w-[34px] border-r border-b border-[#8fa3c0] bg-linear-to-r from-[#dce7f5] to-[#c6d6ea]" />
                      <td className={`w-[106px] pl-px whitespace-nowrap ${line} ${alt ? "" : "bg-[#e8f1fc]"}`}>{name}</td>
                      <td className={`relative w-20 pl-px ${line}`}>
                        {value}
                        {marked && <span className="absolute -top-[3px] -left-[10px] h-6 w-[104px] border-2 border-[#dd0a0a] shadow-[2px_2px_4px_rgba(0,0,0,0.5),inset_2px_2px_4px_rgba(0,0,0,0.3)]" />}
                      </td>
                      <td className={`w-[60px] ${line} ${alt ? "" : "bg-[#e8f1fc]"}`} />
                      <td className={`w-[60px] pl-px ${line}`}>Y</td>
                      <td className="border-b border-[#cbdaf0] bg-white" />
                    </tr>
                  );
                })}
              </tbody>
            </table>
          </div>
        </div>
        <div className="flex w-[14px] shrink-0 flex-col items-center bg-[#f7f8fa] pt-[6px] pb-[6px]">
          <svg width="5" height="6" viewBox="0 0 5 6"><path d="M5 0V6H0z" fill="#444" /></svg>
          <div className="mt-auto flex h-[165px] w-[9px] flex-col items-center justify-center gap-[2px] rounded-[2px] border border-[#8c98a8] bg-white">
            {[0, 1, 2].map((n) => <span key={n} className="h-px w-[7px] bg-[#666]" />)}
          </div>
          <svg width="5" height="6" viewBox="0 0 5 6" className="mt-2"><path d="M0 0H5V6z" fill="#444" /></svg>
        </div>
      </div>
    </div>
  );
}

function BasicInfo() {
  return (
    <section className="flex min-w-0 flex-1 flex-col overflow-hidden">
      <div className="flex h-[26px] shrink-0 bg-linear-to-b from-[#bccde6] to-[#dfe9f7] text-[12px] text-black">
        <button className="relative w-[68px] bg-linear-to-b from-[#2a62b4] via-[#2f74d4] to-[#2460b8] pr-[5px] pb-[3px] font-bold text-white">
          基本信息
          <svg width="10" height="6" viewBox="0 0 10 6" className="absolute bottom-0 left-[30px]"><path d="M0 6L5 0L10 6z" fill="#fff" /></svg>
        </button>
        <button className="w-[66px] pb-[3px]">拓展信息</button>
        <button className="w-[50px] pb-[3px]">工时</button>
      </div>
      <div className="flex min-h-0 flex-1">
        <ParamPanel />
        <VSplit />
        <div className="flex min-w-0 flex-1 flex-col border-b border-[#5f7592]">
          <SlantTab>工艺备注</SlantTab>
          <label htmlFor="remark" className={`flex h-[25px] shrink-0 items-center border-b border-[#5f7592] pl-[2px] text-[12px] text-[#1b2f74] ${headGrad}`}>工艺备注</label>
          <textarea id="remark" className="flex-1 resize-none bg-[#f0f0f0]" />
        </div>
      </div>
    </section>
  );
}

function StatusBar() {
  return (
    <footer className="flex h-[25px] shrink-0 items-center overflow-hidden border-t-2 border-[#5b6b7b] bg-linear-to-b from-[#eaf2fb] to-[#dbe6f4] pt-[6px] text-[12px] whitespace-nowrap text-[#1b2f74]">
      <button className="flex items-center pl-[7px]">
        <svg width="23" height="20" viewBox="0 0 23 20" fill="#1b2f74" className="mr-[9px]">
          <rect width="10" height="9" rx="1" /><rect x="12" width="10" height="9" rx="1" />
          <rect y="11" width="10" height="9" rx="1" /><rect x="12" y="11" width="10" height="9" rx="1" />
        </svg>
        信息中心
      </button>
      <span className="ml-[10px] flex items-center">
        <svg width="16" height="21" viewBox="0 0 16 21" fill="#1b2f74" className="mr-[9px]">
          <circle cx="8" cy="3" r="3" />
          <path d="M4 6H12Q15 6 15 9V15H13V10H12V21H9V15H7V21H4V10H3V15H1V9Q1 6 4 6z" />
        </svg>
        谷松
      </span>
      <span className="ml-[60px] w-[292px]">Model:【正式】||DB:【正式库】</span>
      <span>兴森快捷 EMS工程系统 Version: 1.0.0.58</span>
      <span className="mr-8 ml-auto flex items-center">
        <FaRegClock className="mr-[9px] h-5 w-5" />
        <time className="w-[114px]">2022-09-29 11:04:01</time>
      </span>
    </footer>
  );
}

function EdsWindow() {
  return (
    <div className="absolute top-[391px] right-[21px] bottom-0 left-[281px] flex flex-col overflow-hidden bg-white font-['Liberation_Serif','Noto_Sans_CJK_SC',sans-serif]">
      <WindowHeader />
      <div className="flex min-h-0 flex-1">
        <Sidebar />
        <ComponentLibrary />
        <main className="flex min-w-0 flex-1 flex-col overflow-hidden">
          <div className="flex h-[34px] shrink-0 items-center border-b-2 border-[#9db0cc] bg-[#bbcce5] text-[12px] text-[#1e3160]">
            <div className="-mb-[2px] flex h-[34px] w-[129px] items-center border-r border-[#9db0cc] bg-[#eef5fd] pb-[3px] pl-[7px]">
              <FaBolt className="mr-[10px] h-[19px] w-[15px] text-[#f5b01e]" />
              <span className="font-bold">新流程指示</span>
              <button aria-label="关闭标签" className="mr-[9px] ml-auto">
                <svg width="7" height="7" viewBox="0 0 7 7"><path d="M.5 .5L6.500 6.500M6.500 .5L.5 6.500" stroke="#4d5a6c" /></svg>
              </button>
            </div>
            <svg width="9" height="6" viewBox="0 0 9 6" className="mr-[5px] ml-auto"><path d="M0 0H9L4.500 6z" fill="#1e3160" /></svg>
          </div>
          <div className="flex h-[86px] shrink-0 gap-[15px] overflow-hidden border-b border-[#5b6f8c] bg-linear-to-b from-[#eef5fd] to-[#d6e2f1] pt-[2px] pl-[5px] text-[12px] text-[#1e3160]">
            {tools.map((t) => (
              <div key={t.label} className={`flex shrink-0 items-start ${t.toggle ? "pt-1" : ""}`}><Tool t={t} /></div>
            ))}
          </div>
          <MainInfo />
          <div className="flex h-[5px] shrink-0 items-center bg-linear-to-b from-[#c5d0dd] to-[#7f8f9f]">
            <svg width="62" height="5" viewBox="0 0 62 5" className="ml-[634px]">
              <path d="M3 1L6 5H0zM59 1L62 5H56z" fill="#1b2f74" />
              <path d="M13 2H48" stroke="#1b2f74" strokeWidth="3" strokeDasharray="2 2" />
            </svg>
          </div>
          <div className="flex min-h-0 flex-1">
            <ProcessFlow />
            <VSplit />
            <BasicInfo />
          </div>
        </main>
      </div>
      <StatusBar />
    </div>
  );
}

export default function App() {
  return (
    <div className="relative h-screen min-h-[900px] overflow-hidden bg-black">
      <EditorWindow />
      <EdsWindow />
    </div>
  );
}
